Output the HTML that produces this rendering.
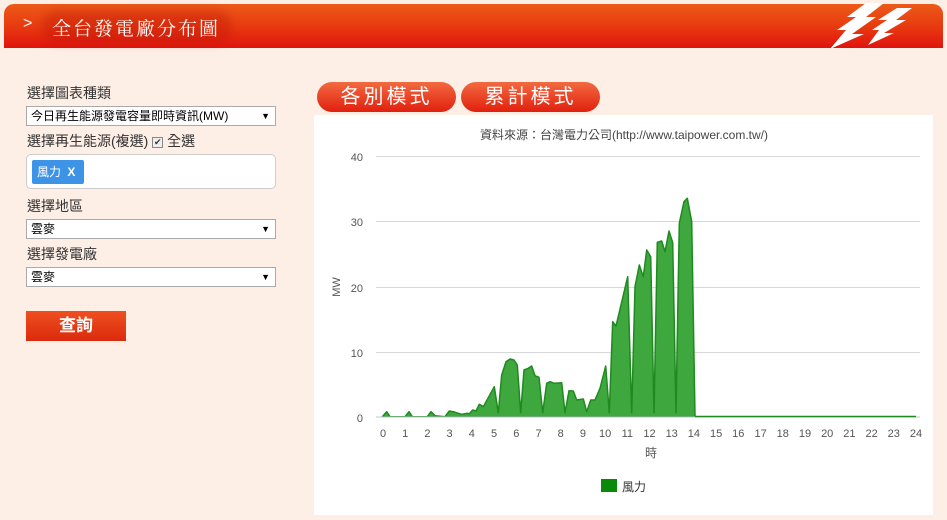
<!DOCTYPE html>
<html><head><meta charset="utf-8"><style>
*{margin:0;padding:0;box-sizing:border-box}
body{width:947px;height:520px;background:#fdeee6;font-family:"Liberation Sans","Noto Sans CJK TC",sans-serif;position:relative;overflow:hidden}
.hdr{position:absolute;left:4px;top:4px;width:939px;height:44px;border-radius:10px 10px 0 0;background:linear-gradient(#ec5a18,#e83b10 50%,#e0140e)}
.hdr .blob{position:absolute;left:38px;top:6px;width:190px;height:34px;border-radius:17px;background:rgba(190,20,10,0.35);filter:blur(4px)}
.hdr .t{position:absolute;left:48px;top:10px;color:#fff;font-size:19px;letter-spacing:2px;font-family:"Noto Serif CJK SC","Noto Sans CJK TC",serif}
.hdr .a{position:absolute;left:19px;top:11px;color:#fff;font-size:16px}
.lbl{position:absolute;left:27px;font-size:14px;color:#333}
.sel{position:absolute;left:26px;width:250px;height:20px;background:#fff;border:1px solid #aaa;font-size:12px;color:#000;padding:2px 4px;line-height:15px}
.sel:after{content:"▼";position:absolute;right:5px;top:2px;font-size:9px}
.btn{position:absolute;top:82px;height:30px;border-radius:15px;background:linear-gradient(#f26a40,#e1200e);color:#fff;font-size:20px;letter-spacing:3px;text-align:center;line-height:30px}
</style></head><body>
<div class="hdr"><div class="blob"></div><span class="a">&gt;</span><span class="t">全台發電廠分布圖</span>
<svg style="position:absolute;left:-4px;top:-4px" width="947" height="52"><g fill="#fff"><polygon points="866,3 884,3 866,17 876,17 852,34 864,34 830,49 846,30 837,30 856,17 847,17"/><polygon points="897,8 912,8 896,20 906,20 884,33 894,33 868,45 879,30 872,30 887,20 878,20"/></g></svg></div>
<div class="lbl" style="top:83px">選擇圖表種類</div>
<div class="sel" style="top:106px">今日再生能源發電容量即時資訊(MW)</div>
<div class="lbl" style="top:131px">選擇再生能源(複選) <span style="display:inline-block;width:11px;height:11px;border:1px solid #888;background:#eee;font-size:9px;line-height:9px;text-align:center;vertical-align:1px">✔</span> 全選</div>
<div style="position:absolute;left:26px;top:154px;width:250px;height:35px;background:#fff;border:1px solid #ccc;border-radius:5px"><span style="position:absolute;left:5px;top:5px;height:24px;width:52px;background:#3d94e6;color:#fff;font-size:12px;line-height:24px;padding-left:5px;border-radius:2px">風力 <b style="margin-left:3px">X</b></span></div>
<div class="lbl" style="top:196px">選擇地區</div>
<div class="sel" style="top:219px">雲麥</div>
<div class="lbl" style="top:244px">選擇發電廠</div>
<div class="sel" style="top:267px">雲麥</div>
<div style="position:absolute;left:26px;top:311px;width:100px;height:30px;background:linear-gradient(#ef4f20,#da2a0c);color:#fff;font-size:17px;font-weight:bold;text-align:center;line-height:30px">查詢</div>
<div class="btn" style="left:317px;width:139px">各別模式</div>
<div class="btn" style="left:461px;width:139px">累計模式</div>
<div style="position:absolute;left:314px;top:115px;width:619px;height:400px;background:#fff"></div>
<svg style="position:absolute;left:0;top:0" width="947" height="520" font-family="Liberation Sans,Noto Sans CJK TC,sans-serif">
<text x="624" y="139" font-size="12" fill="#444" text-anchor="middle">資料來源：台灣電力公司(http://www.taipower.com.tw/)</text>
<g stroke="#d8d8d8"><line x1="376" x2="920" y1="156.5" y2="156.5"/><line x1="376" x2="920" y1="221.5" y2="221.5"/><line x1="376" x2="920" y1="287.5" y2="287.5"/><line x1="376" x2="920" y1="352.5" y2="352.5"/></g>
<g font-size="11" fill="#555" text-anchor="end"><text x="363" y="161">40</text><text x="363" y="226">30</text><text x="363" y="292">20</text><text x="363" y="357">10</text><text x="363" y="422">0</text></g>
<text x="340" y="287" font-size="11" fill="#555" transform="rotate(-90 340 287)" text-anchor="middle">MW</text>
<polygon fill="#3ea83e" stroke="#1f8a1f" stroke-width="1.5" stroke-linejoin="round" points="382.3,416.7 386.7,411.7 390,416.7 405,416.7 409,411.7 412.3,416.7 427.3,416.7 431,411.7 435,415.7 445,416.7 449.3,411 453.3,411.7 461.7,414.3 466.7,413.3 469.3,413.7 472.7,410 476,411 479.3,404.3 483.3,406.7 494.3,386.7 498.3,412.7 501.7,375 506,361.7 510,359 514,360 517.3,365 520.7,412.7 524,370 528.3,368.3 531.7,366 535,375.7 539,377.3 542.7,412.7 546.7,383.3 550,381.7 554.3,383.3 561.7,382.7 565,412.7 569,390.7 573.3,391 576.7,400 583.3,399 586.7,411.7 590.7,400 595,400 600,388.3 605.7,366 609.3,412.7 612.7,321.7 616,326 627.7,276.7 631.7,412.7 635,286.7 639.3,265 643.3,276.7 646.7,250 650.7,256.7 654,412.7 657.3,242.3 661.7,241 665,251.7 669,231 672.7,242.7 676,412.7 679.3,223.3 684,201.7 687.3,198.3 691.7,221.7 695,416.7"/>
<line x1="376" x2="920" y1="417" y2="417" stroke="#bcc" />
<line x1="695" x2="916" y1="416.5" y2="416.5" stroke="#1f8a1f" stroke-width="1.5"/>
<g font-size="11" fill="#555" text-anchor="middle">
<text x="383" y="437">0</text><text x="405.2" y="437">1</text><text x="427.4" y="437">2</text><text x="449.6" y="437">3</text><text x="471.8" y="437">4</text><text x="494" y="437">5</text><text x="516.3" y="437">6</text><text x="538.5" y="437">7</text><text x="560.7" y="437">8</text><text x="582.9" y="437">9</text><text x="605.1" y="437">10</text><text x="627.3" y="437">11</text><text x="649.5" y="437">12</text><text x="671.7" y="437">13</text><text x="693.9" y="437">14</text><text x="716.1" y="437">15</text><text x="738.3" y="437">16</text><text x="760.6" y="437">17</text><text x="782.8" y="437">18</text><text x="805" y="437">19</text><text x="827.2" y="437">20</text><text x="849.4" y="437">21</text><text x="871.6" y="437">22</text><text x="893.8" y="437">23</text><text x="916" y="437">24</text></g>
<text x="651" y="457" font-size="12" fill="#555" text-anchor="middle">時</text>
<rect x="601" y="479" width="16" height="13" fill="#0a8a0a"/>
<text x="622" y="491" font-size="12" fill="#333">風力</text>
</svg>
</body></html>
